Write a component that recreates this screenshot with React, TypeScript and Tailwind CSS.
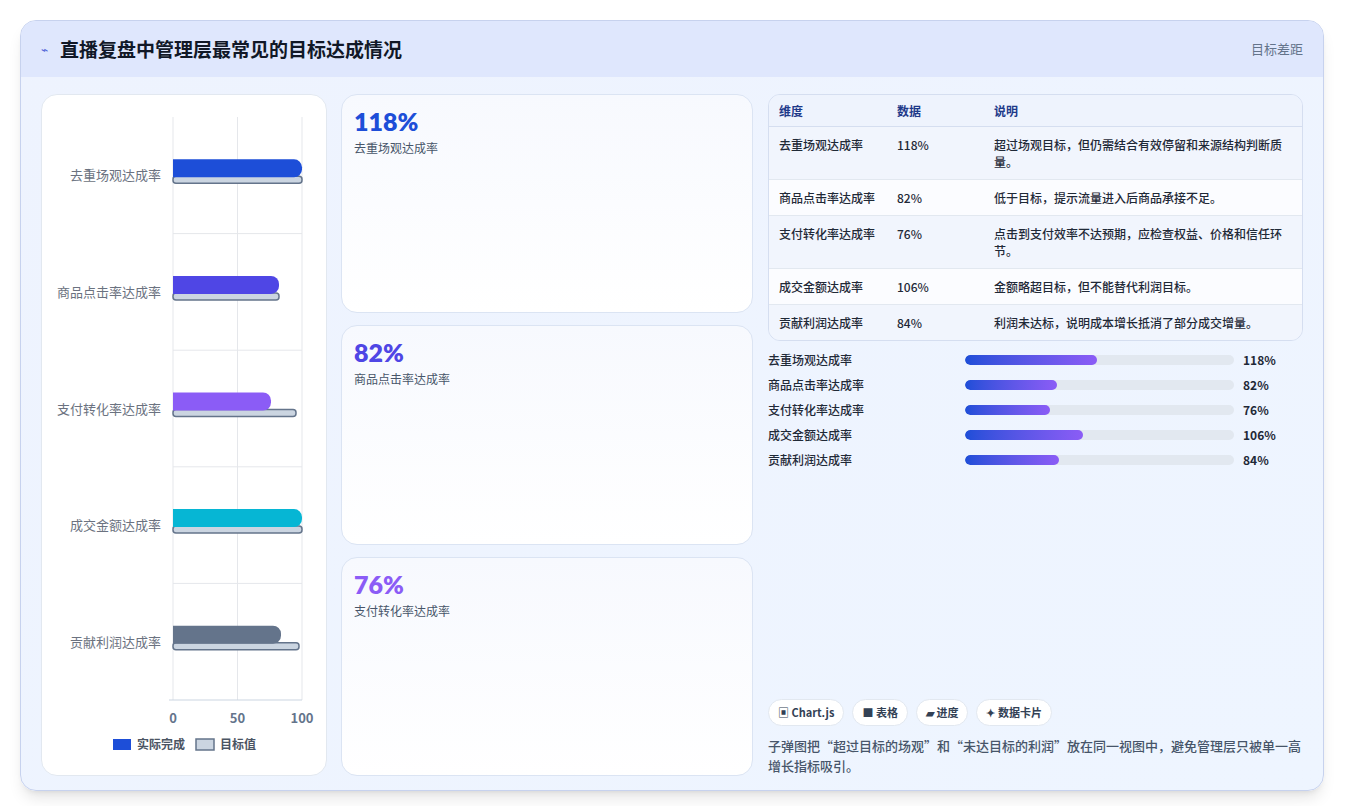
import React from "react";

const rows = [
  { n: "去重场观达成率", v: "118%", d: "超过场观目标，但仍需结合有效停留和来源结构判断质量。", p: 118 },
  { n: "商品点击率达成率", v: "82%", d: "低于目标，提示流量进入后商品承接不足。", p: 82 },
  { n: "支付转化率达成率", v: "76%", d: "点击到支付效率不达预期，应检查权益、价格和信任环节。", p: 76 },
  { n: "成交金额达成率", v: "106%", d: "金额略超目标，但不能替代利润目标。", p: 106 },
  { n: "贡献利润达成率", v: "84%", d: "利润未达标，说明成本增长抵消了部分成交增量。", p: 84 },
];

const bars = [
  { c: "#1d4ed8", a: 129, t: 129 },
  { c: "#4f46e5", a: 106, t: 106 },
  { c: "#8b5cf6", a: 98, t: 123 },
  { c: "#06b6d4", a: 129, t: 129 },
  { c: "#64748b", a: 108, t: 126 },
];

function Chart() {
  const x0 = 131, y0 = 22, band = 116.6;
  return (
    <svg width="286" height="680" className="block">
      {[0, 64.5, 129].map((x) => (
        <line key={x} x1={x0 + x} x2={x0 + x} y1={y0} y2={605} stroke="#e5e7eb" />
      ))}
      {[1, 2, 3, 4].map((i) => (
        <line key={i} x1={x0} x2={x0 + 129} y1={y0 + band * i} y2={y0 + band * i} stroke="#e5e7eb" />
      ))}
      <line x1={x0 - 4} x2={x0 + 129} y1={605} y2={605} stroke="#cbd5e1" />
      {rows.map((r, i) => {
        const cy = y0 + band * i + band / 2;
        const b = bars[i];
        return (
          <g key={i}>
            <text x={119} y={cy + 5} textAnchor="end" fontSize="13" fill="#6b7280">{r.n}</text>
            <rect x={x0} y={cy + 1} width={b.t} height={7} rx={3} fill="#cbd5e1" stroke="#64748b" strokeWidth="1.5" />
            <path d={`M${x0} ${cy - 16} h${b.a - 8} a8 8 0 0 1 8 8 v2 a8 8 0 0 1 -8 8 h-${b.a - 8} z`} fill={b.c} />
          </g>
        );
      })}
      {[["0", 0], ["50", 64.5], ["100", 129]].map(([t, x]) => (
        <text key={t} x={x0 + (x as number)} y={628} textAnchor="middle" fontSize="13" fontWeight="700" fill="#64748b">{t}</text>
      ))}
      <rect x={71} y={644} width={18} height={11} fill="#1d4ed8" />
      <text x={95} y={654} fontSize="12" fontWeight="700" fill="#4b5563">实际完成</text>
      <rect x={154} y={644} width={18} height={11} fill="#cbd5e1" stroke="#64748b" strokeWidth="1.5" />
      <text x={178} y={654} fontSize="12" fontWeight="700" fill="#4b5563">目标值</text>
    </svg>
  );
}

export default function App() {
  const font = { fontFamily: '"Noto Sans CJK SC", "Noto Sans", sans-serif' };
  return (
    <div className="w-[1345px] h-[806px] bg-white p-5" style={font}>
      <div className="h-[771px] w-[1304px] rounded-2xl border border-[#c7d2ee] bg-gradient-to-br from-[#eef3fe] to-[#eef5ff] shadow-lg overflow-hidden flex flex-col">
        <div className="h-14 bg-[#dfe7fd] flex items-center justify-between px-5 shrink-0">
          <div className="flex items-center gap-3">
            <span className="text-[#4f63d8] text-xs">⌁</span>
            <span className="text-[19px] font-bold text-[#111827]">直播复盘中管理层最常见的目标达成情况</span>
          </div>
          <span className="text-[13px] text-[#64748b]">目标差距</span>
        </div>
        <div className="flex gap-[14px] px-5 pt-[17px] pb-[19px] flex-1">
          <div className="w-[286px] rounded-2xl bg-white border border-[#e2e8f0]">
            <Chart />
          </div>
          <div className="w-[412px] flex flex-col gap-[12px]">
            {[["118%", "#1d4ed8", "去重场观达成率"], ["82%", "#4f46e5", "商品点击率达成率"], ["76%", "#8b5cf6", "支付转化率达成率"]].map(([v, c, l]) => (
              <div key={v} className="flex-1 rounded-2xl border border-[#dbe4f3] bg-gradient-to-b from-[#f7f9fe] to-white px-3 pt-2">
                <div className="text-[25px] font-extrabold leading-[36px]" style={{ color: c, fontFamily: "Lato, sans-serif" }}>{v}</div>
                <div className="text-[12px] text-[#475569]">{l}</div>
              </div>
            ))}
          </div>
          <div className="flex-1 flex flex-col pl-[1px]">
            <div className="rounded-xl border border-[#d5def0] overflow-hidden text-[12px]">
              <div className="flex h-8 items-center bg-[#eef3fd] border-b border-[#d5def0] text-[#1e3a8a] font-bold">
                <div className="w-[128px] pl-[10px]">维度</div>
                <div className="w-[97px]">数据</div>
                <div className="flex-1">说明</div>
              </div>
              {rows.map((r, i) => (
                <div key={i} className={`flex py-[9px] text-[#1f2937] font-medium leading-[17px] ${i % 2 === 0 ? "bg-[#f1f5fd]" : "bg-[#fbfcff]"} ${i < 4 ? "border-b border-[#e2e8f0]" : ""}`}>
                  <div className="w-[128px] pl-[10px]">{r.n}</div>
                  <div className="w-[97px]">{r.v}</div>
                  <div className="flex-1 pr-3">{r.d}</div>
                </div>
              ))}
            </div>
            <div className="flex flex-col gap-[8px] mt-[10px]">
              {rows.map((r, i) => (
                <div key={i} className="flex items-center h-[17px] text-[12px] font-medium text-[#1f2937]">
                  <div className="w-[197px]">{r.n}</div>
                  <div className="w-[269px] h-[10px] rounded-full bg-[#e2e8f0] overflow-hidden">
                    <div className="h-full rounded-full bg-gradient-to-r from-[#1d4ed8] to-[#8b5cf6]" style={{ width: `${(r.p / 118) * 49}%` }} />
                  </div>
                  <div className="ml-[9px] font-bold">{r.v}</div>
                </div>
              ))}
            </div>
            <div className="mt-auto flex gap-2 text-[11px] font-bold text-[#334155]">
              {["▣ Chart.js", "■ 表格", "▰ 进度", "✦ 数据卡片"].map((t) => (
                <span key={t} className="h-[27px] px-[9px] rounded-full bg-white border border-[#e2e8f0] flex items-center">{t}</span>
              ))}
            </div>
            <p className="mt-[10px] text-[13px] leading-[20px] text-[#475569] font-medium">
              子弹图把“超过目标的场观”和“未达目标的利润”放在同一视图中，避免管理层只被单一高增长指标吸引。
            </p>
          </div>
        </div>
      </div>
    </div>
  );
}
